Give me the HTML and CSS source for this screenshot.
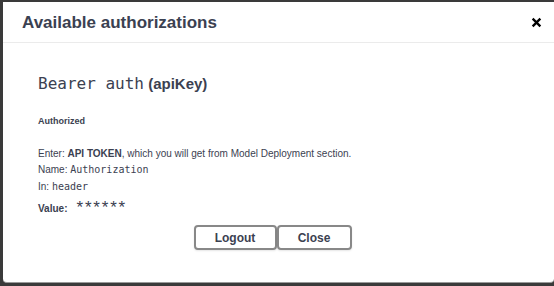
FILE: index.html
```html
<!DOCTYPE html>
<html lang="en">

<head>
    <meta charset="UTF-8">
    <meta name="viewport" content="width=device-width, initial-scale=1.0">
    <title>Available authorizations</title>

    <link rel="stylesheet" href="styles.css">
</head>

<body>
    <div class="modal">
        <div class="modal-header">
            <h3>Available authorizations</h3>
            <button class="close-modal" aria-label="Close">
                <svg width="11" height="11" viewBox="0 0 20 20">
                    <path d="M3 3 L17 17 M17 3 L3 17" stroke="#000" stroke-width="4.2" stroke-linecap="butt" />
                </svg>
            </button>
        </div>

        <div class="modal-body">
            <h4><code>Bearer auth</code>&nbsp;(apiKey)</h4>
            <h6>Authorized</h6>

            <div class="markdown">
                <p>Enter: <strong>API TOKEN</strong>, which you will get from Model Deployment section.</p>
            </div>
            <p>Name: <code>Authorization</code></p>
            <p>In: <code>header</code></p>
            <div class="value-row">
                <label>Value:</label>
                <span class="stars">******</span>
            </div>

            <div class="auth-btn-wrapper">
                <button class="btn">Logout</button>
                <button class="btn">Close</button>
            </div>
        </div>
    </div>
</body>

</html>
```

FILE: styles.css
```css
/* Reset */
* {
    margin: 0;
    padding: 0;
    box-sizing: border-box;
}

body {
    background: #3a3a3a;
    font-family: 'Liberation Sans', Arial, sans-serif;
    color: #3b4151;
    height: 286px;
    overflow: hidden;
    padding: 2px 0 3px 3px;
}

/* Modal */
.modal {
    background: #fff;
    height: 281px;
    border-radius: 0 0 4px 4px;
    border-bottom: 1px solid #9a9a9a;
}

.modal-header {
    display: flex;
    align-items: center;
    justify-content: space-between;
    height: 41px;
    padding: 1px 12px 0 19px;
    border-bottom: 1px solid #ebebeb;
}

.modal-header h3 {
    font-size: 17px;
    font-weight: 700;
    color: #3b4151;
}

.close-modal {
    background: none;
    border: none;
    width: 11px;
    height: 11px;
    display: flex;
}

/* Body */
.modal-body {
    padding: 31px 0 0 35px;
}

.modal-body h4 {
    font-size: 15px;
    font-weight: 700;
    margin-bottom: 23px;
}

.modal-body h4 code {
    font-family: 'DejaVu Sans Mono', monospace;
    font-size: 16px;
    font-weight: 400;
}

.modal-body h6 {
    font-size: 9px;
    font-weight: 700;
    margin-bottom: 20px;
}

.modal-body p {
    font-size: 10px;
    line-height: 16px;
    margin-bottom: 1px;
}

.modal-body .markdown p {
    margin-bottom: 0;
}

.modal-body p code {
    font-family: 'DejaVu Sans Mono', monospace;
    font-size: 10px;
}

.value-row {
    display: flex;
    align-items: flex-start;
    gap: 9px;
    margin-top: 3px;
}

.value-row label {
    font-size: 10px;
    font-weight: 700;
    padding-top: 5px;
}

.value-row .stars {
    font-size: 17px;
    line-height: 16px;
    letter-spacing: 1.8px;
    padding-top: 2px;
}

/* Buttons */
.auth-btn-wrapper {
    display: flex;
    justify-content: center;
    margin: 9px 12px 0 -35px;
}

.btn {
    background: #fff;
    border: 2px solid #888;
    border-radius: 4px;
    font-family: 'Liberation Sans', Arial, sans-serif;
    font-size: 12px;
    font-weight: 700;
    color: #3b4151;
    height: 25px;
    width: 83px;
    box-shadow: 0 1px 2px rgba(0, 0, 0, 0.1);
}

.btn + .btn {
    width: 75px;
}
```
